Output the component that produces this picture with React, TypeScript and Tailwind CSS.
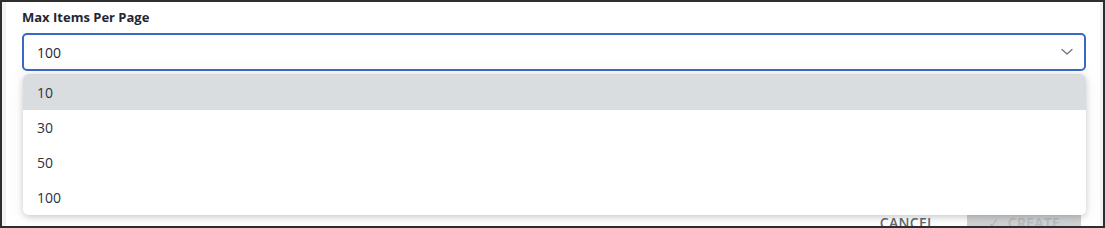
import React from "react";

export default function App() {
  const options = ["10", "30", "50", "100"];
  return (
    <div
      className="relative w-[1105px] h-[228px] overflow-hidden border-2 border-[#2e2e2e] bg-[#f2f3f4]"
      style={{ fontFamily: "'Open Sans', Lato, sans-serif" }}
    >
      <div className="ml-[4px] mr-[3px] h-full bg-white pl-[16px] pr-[14px] pt-[6px] flex flex-col">
        <div className="text-[13px] leading-[18px] font-bold text-[#1f2733]">Max Items Per Page</div>
        <div className="mt-[7px] h-[38px] rounded-[5px] border-2 border-[#3a69c4] flex items-center justify-between pl-[13px] pr-[10px]">
          <span className="text-[14px] text-[#1f2733]">100</span>
          <svg width="12" height="8" viewBox="0 0 12 8" fill="none" className="mr-[1px]">
            <path d="M1 1.5 L6 6 L11 1.5" stroke="#6b7480" strokeWidth="1.3" strokeLinecap="round" strokeLinejoin="round" />
          </svg>
        </div>
        <div className="mt-auto flex justify-end items-start gap-[32px] pr-[5px] h-[12px]">
          <span className="text-[14px] leading-[20px] tracking-[0.3px] font-semibold text-[#5f6a75] -mt-[1px]">CANCEL</span>
          <div className="w-[114px] h-[20px] bg-[#cfd1d3] flex items-start justify-center gap-[8px]">
            <span className="text-[14px] leading-[20px] text-[#b8bbbe] -mt-[1px]">✓</span>
            <span className="text-[14px] leading-[20px] tracking-[0.3px] font-semibold text-[#b8bbbe] -mt-[1px]">CREATE</span>
          </div>
        </div>
      </div>
      <div className="absolute left-[21px] top-[72px] w-[1063px] h-[141px] bg-white rounded-[6px] shadow-[0_2px_6px_rgba(0,0,0,0.18),0_0_20px_rgba(0,0,0,0.06)] overflow-hidden border-t border-[#d5d7da]">
        {options.map((o, i) => (
          <div
            key={o}
            className={`h-[35px] flex items-center pl-[14px] text-[14px] text-[#2a3340] ${i === 0 ? "bg-[#dadde0]" : "bg-white"}`}
          >
            {o}
          </div>
        ))}
      </div>
    </div>
  );
}
